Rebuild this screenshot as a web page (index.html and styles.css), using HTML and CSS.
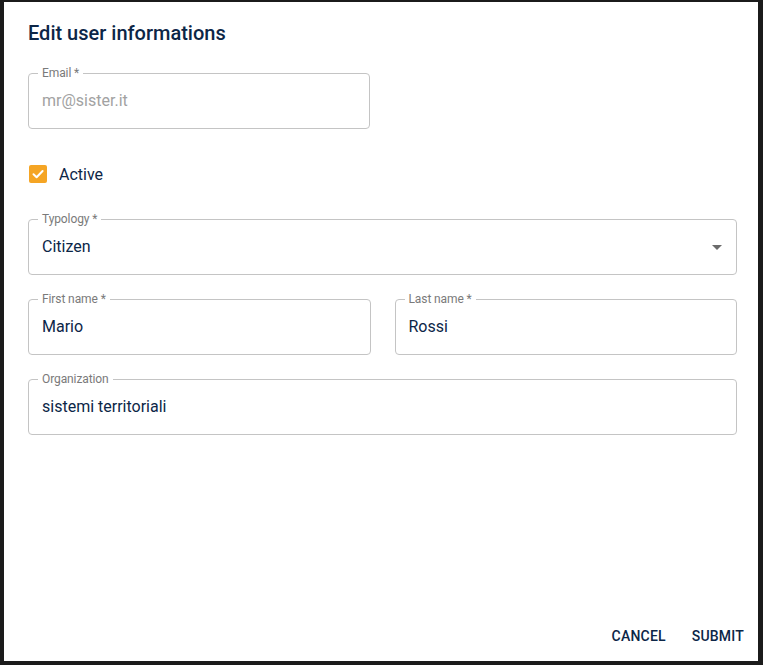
FILE: index.html
```html
<!DOCTYPE html>
<html>
<head>
<meta charset="utf-8">
<link rel="stylesheet" href="styles.css">
</head>
<body>
<div class="dialog">
  <h2 class="title">Edit user informations</h2>
  <div class="content">
    <div class="row half">
      <div class="field disabled">
        <span class="label">Email *</span>
        <span class="value">mr@sister.it</span>
      </div>
    </div>
    <label class="check">
      <span class="box">
        <svg width="18" height="18" viewBox="0 0 18 18"><path d="M4.5 9.3 L7.6 12.2 L13.6 6" fill="none" stroke="#fff" stroke-width="2" stroke-linecap="round" stroke-linejoin="round"/></svg>
      </span>
      <span class="check-text">Active</span>
    </label>
    <div class="row">
      <div class="field select">
        <span class="label">Typology *</span>
        <span class="value">Citizen</span>
        <svg class="arrow" width="10" height="5" viewBox="0 0 10 5"><path d="M0 0 L10 0 L5 5 Z" fill="#6b6b6b"/></svg>
      </div>
    </div>
    <div class="row two">
      <div class="field">
        <span class="label">First name *</span>
        <span class="value">Mario</span>
      </div>
      <div class="field">
        <span class="label">Last name *</span>
        <span class="value">Rossi</span>
      </div>
    </div>
    <div class="row">
      <div class="field">
        <span class="label">Organization</span>
        <span class="value">sistemi territoriali</span>
      </div>
    </div>
  </div>
  <div class="actions">
    <button class="btn">Cancel</button>
    <button class="btn">Submit</button>
  </div>
</div>
</body>
</html>
```
FILE: styles.css
```css
* { box-sizing: border-box; }
html, body { margin: 0; padding: 0; }
body {
  background: #1b1b1b;
  width: 763px;
  height: 665px;
  padding: 2px 5px 4px 4px;
  font-family: Roboto, "Noto Sans", sans-serif;
  color: #0c2647;
}
.dialog {
  background: #fff;
  width: 754px;
  height: 659px;
  display: flex;
  flex-direction: column;
}
.title {
  margin: 0;
  padding: 15px 24px 0 24px;
  font-size: 20px;
  line-height: 32px;
  font-weight: 500;
  color: #0c2647;
}
.content {
  flex: 1;
  padding: 24px 21px 0 24px;
  display: flex;
  flex-direction: column;
}
.row { display: flex; }
.row.half .field { width: 342px; flex: none; }
.row.two { gap: 24px; margin-top: 24px; }
.content > .row:last-child { margin-top: 24px; }
.field {
  position: relative;
  flex: 1;
  height: 56px;
  border: 1px solid #c4c4c4;
  border-radius: 4px;
  display: flex;
  align-items: center;
  padding: 0 13px;
}
.label {
  position: absolute;
  top: -8px;
  left: 9px;
  padding: 0 4px;
  background: #fff;
  font-size: 12px;
  line-height: 14px;
  color: #7a7a7a;
  letter-spacing: -0.1px;
}
.value {
  font-size: 16px;
  line-height: 20px;
  color: #0c2647;
}
.disabled .value { color: #a2a2a2; }
.select .arrow {
  position: absolute;
  right: 14px;
  top: 25px;
}
.check {
  display: flex;
  align-items: center;
  height: 36px;
  margin: 27px 0 27px 1px;
}
.box {
  width: 18px;
  height: 18px;
  background: #f5a524;
  border-radius: 2px;
  display: flex;
}
.check-text {
  margin-left: 12px;
  font-size: 16px;
  color: #0c2647;
}
.actions {
  display: flex;
  justify-content: flex-end;
  gap: 10px;
  padding: 9px 6px 7px 8px;
}
.btn {
  border: none;
  background: transparent;
  font-family: Roboto, sans-serif;
  font-size: 14px;
  font-weight: 500;
  text-transform: uppercase;
  letter-spacing: 0.2px;
  color: #0c2647;
  height: 36px;
  padding: 6px 8px;
  min-width: 64px;
}
```
